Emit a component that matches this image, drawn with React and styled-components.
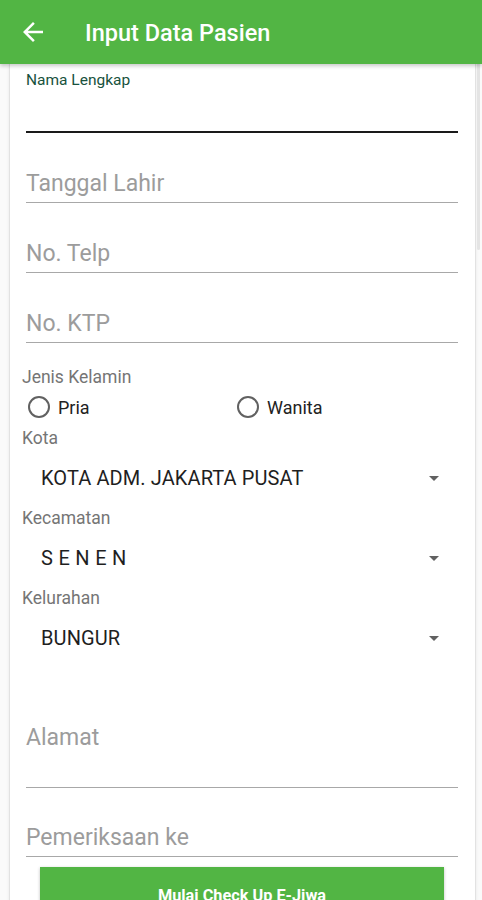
import styled, { createGlobalStyle } from "styled-components";

const Global = createGlobalStyle`
  html, body {
    margin: 0;
    padding: 0;
    background: #fafafa;
    font-family: Roboto, "Noto Sans", sans-serif;
  }
`

const Screen = styled.div`
  position: relative;
  width: 482px;
  height: 900px;
  overflow: hidden;
  background: #fafafa;
`
const AppBar = styled.header`
  position: relative;
  z-index: 2;
  box-sizing: border-box;
  height: 64px;
  background: #52b544;
  display: flex;
  align-items: center;
  padding: 2px 0 0 18px;
  box-shadow: 0 2px 4px rgba(0,0,0,0.22);
`
const BackButton = styled.button`
  border: none;
  background: none;
  padding: 0;
  width: 30px;
  height: 30px;
  display: flex;
  margin: -2px 37px 0 0;
`
const Title = styled.h1`
  margin: 0;
  color: #fff;
  font-size: 23.5px;
  font-weight: 500;
`
const Body = styled.div`
  padding: 0 6px 0 9px;
`
const Card = styled.form`
  background: #fff;
  border-left: 1px solid #e2e2e2;
  border-right: 1px solid #e2e2e2;
  box-shadow: 0 0 3px rgba(0,0,0,0.08);
  padding: 0 17px 0 12px;
  display: flex;
  flex-direction: column;
  min-height: 836px;
`
const Field = styled.div`
  box-sizing: border-box;
  height: ${p => p.h || 70}px;
  margin-left: 4px;
  display: flex;
  flex-direction: column;
  justify-content: ${p => p.top ? "flex-start" : "flex-end"};
  padding-top: ${p => p.pt || 0}px;
  padding-bottom: ${p => p.top ? 0 : 5}px;
  border-bottom: ${p => p.focused ? "2px solid #1a1a1a" : "1px solid #a8a8a8"};
`
const FloatLabel = styled.span`
  margin-top: 7px;
  font-size: 15.5px;
  line-height: 18px;
  color: #18523d;
`
const Placeholder = styled.span`
  font-size: 23px;
  line-height: 26px;
  color: #9c9c9c;
`
const GroupLabel = styled.div`
  font-size: 17.5px;
  line-height: 20px;
  color: #757575;
  margin-top: ${p => p.mt || 0}px;
`
const RadioRow = styled.div`
  display: grid;
  grid-template-columns: 209px 209px;
  align-items: center;
  height: 30px;
  margin-left: 6px;
  margin-top: 5px;
  margin-bottom: 6px;
`
const Radio = styled.label`
  display: flex;
  align-items: center;
  gap: 8px;
  font-size: 18px;
  color: #222;
`
const Circle = styled.span`
  box-sizing: border-box;
  width: 22px;
  height: 22px;
  border-radius: 50%;
  border: 2px solid #616161;
`
const Select = styled.div`
  height: 60px;
  display: flex;
  align-items: center;
  justify-content: space-between;
  padding: 0 19px 0 19px;
  font-size: 20px;
  color: #1f1f1f;
  letter-spacing: ${p => p.spaced ? "0.3px" : "0.1px"};
`
const Caret = styled.span`
  width: 0;
  height: 0;
  border-left: 5px solid transparent;
  border-right: 5px solid transparent;
  border-top: 5px solid #616161;
`
const SubmitButton = styled.button`
  margin: 10px 14px 0 18px;
  height: 56px;
  border: none;
  background: #52b544;
  color: #fff;
  font-family: Roboto, sans-serif;
  font-size: 16.3px;
  font-weight: 700;
  box-shadow: 0 1px 3px rgba(0,0,0,0.25);
`
const ScrollThumb = styled.div`
  position: absolute;
  right: 2px;
  top: 56px;
  width: 3px;
  height: 194px;
  background: #e4e4e4;
  border-radius: 2px;
`

function BackArrow() {
  return (
    <svg width="30" height="30" viewBox="0 0 24 24" fill="#fff">
      <path d="M20 11H7.83l5.59-5.59L12 4l-8 8 8 8 1.41-1.41L7.83 13H20v-2z" />
    </svg>
  )
}

function Dropdown({ value, spaced }) {
  return (
    <Select spaced={spaced}>
      <span>{value}</span>
      <Caret />
    </Select>
  )
}

export default function App() {
  return (
    <Screen>
      <Global />
      <AppBar>
        <BackButton><BackArrow /></BackButton>
        <Title>Input Data Pasien</Title>
      </AppBar>
      <Body>
        <Card>
          <Field h={69} top focused>
            <FloatLabel>Nama Lengkap</FloatLabel>
          </Field>
          <Field><Placeholder>Tanggal Lahir</Placeholder></Field>
          <Field><Placeholder>No. Telp</Placeholder></Field>
          <Field><Placeholder>No. KTP</Placeholder></Field>
          <GroupLabel mt={24}>Jenis Kelamin</GroupLabel>
          <RadioRow>
            <Radio><Circle />Pria</Radio>
            <Radio><Circle />Wanita</Radio>
          </RadioRow>
          <GroupLabel>Kota</GroupLabel>
          <Dropdown value="KOTA ADM. JAKARTA PUSAT" />
          <GroupLabel>Kecamatan</GroupLabel>
          <Dropdown value="S E N E N" spaced />
          <GroupLabel>Kelurahan</GroupLabel>
          <Dropdown value="BUNGUR" />
          <Field h={120} top pt={57}><Placeholder>Alamat</Placeholder></Field>
          <Field h={69}><Placeholder>Pemeriksaan ke</Placeholder></Field>
          <SubmitButton type="button">Mulai Check Up E-Jiwa</SubmitButton>
        </Card>
      </Body>
      <ScrollThumb />
    </Screen>
  )
}
